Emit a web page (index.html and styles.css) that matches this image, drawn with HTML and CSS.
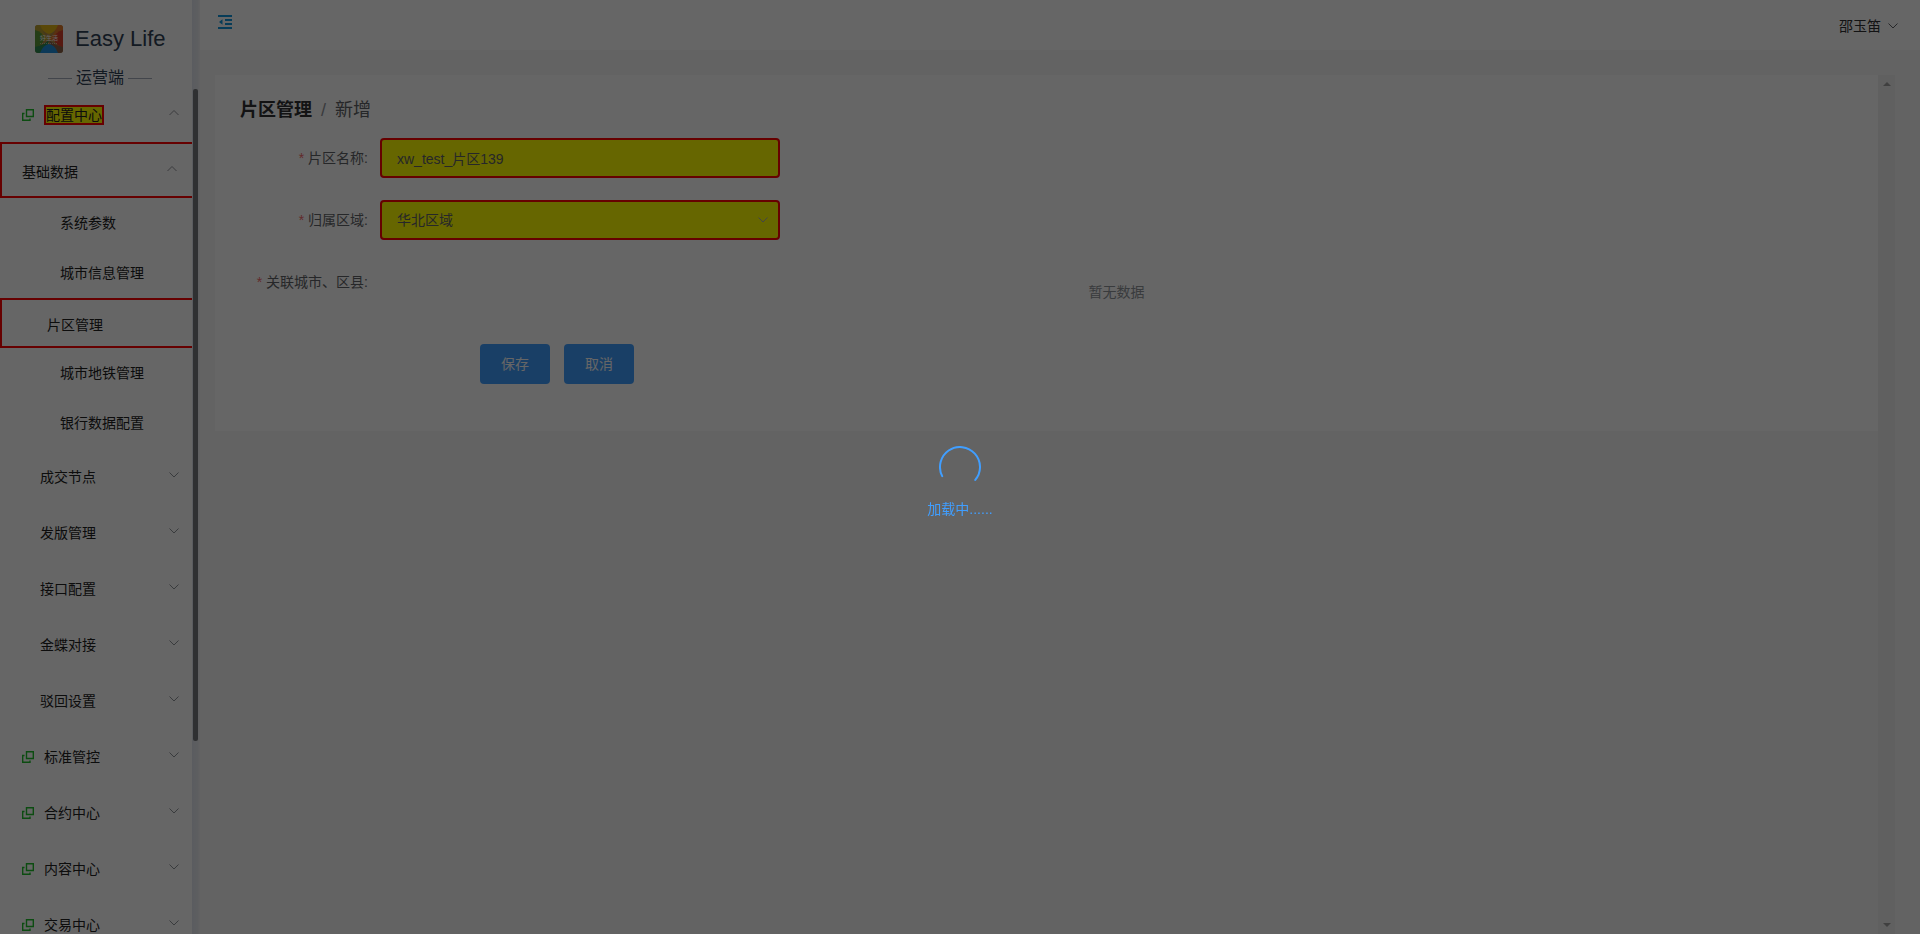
FILE: index.html
```html
<!DOCTYPE html>
<html lang="zh-CN">
<head>
<meta charset="utf-8">
<title>Easy Life 运营端</title>
<link rel="stylesheet" href="styles.css">
</head>
<body>
<svg class="defs" width="0" height="0" aria-hidden="true">
  <symbol id="down" viewBox="0 0 12 12"><path d="M1.500 3.500L6 8L10.500 3.500" fill="none" stroke="currentColor"/></symbol>
  <symbol id="up" viewBox="0 0 12 12"><path d="M1.500 8L6 3.500L10.500 8" fill="none" stroke="currentColor"/></symbol>
  <symbol id="copy" viewBox="0 0 12 12"><path d="M4.500 .7H11.300V7.500H4.500ZM2.500 4.500H.7V11.300H8V9.500" fill="none" stroke="currentColor" stroke-width="1.400"/></symbol>
</svg>
<div class="app">
  <aside class="sidebar">
    <div class="sidebar-body">
      <div class="brand">
        <svg class="logo" viewBox="0 0 28 28" aria-hidden="true">
          <defs><clipPath id="round"><rect width="28" height="28" rx="3"/></clipPath></defs>
          <g clip-path="url(#round)">
            <rect width="28" height="28" fill="#b08a48"/>
            <path d="M0 0H6Q8 9 14 14L0 20Z" fill="#b8a030"/>
            <path d="M28 0H22Q20 9 14 14L28 20Z" fill="#e07828"/>
            <path d="M5 0H23Q20 8 14 9Q8 8 5 0Z" fill="#e0b414"/>
            <path d="M0 5Q8 7 9 14Q8 20 0 23Z" fill="#5a9a38"/>
            <path d="M28 5Q20 7 19 14Q20 20 28 23Z" fill="#d8402c"/>
            <path d="M0 28V22Q9 20 14 15L10 28Z" fill="#2f8a50"/>
            <path d="M28 28V22Q19 20 14 15L18 28Z" fill="#8a6048"/>
            <path d="M5 28Q8 20 14 19Q20 20 23 28Z" fill="#1f90dc"/>
          </g>
          <text class="logo-text" x="14" y="15" text-anchor="middle">好生活</text>
          <path d="M5 18.500H23" stroke="#fff" stroke-width=".8" stroke-dasharray="1 1" opacity=".6"/>
        </svg>
        <span class="brand-name">Easy Life</span>
      </div>
      <div class="platform">运营端</div>
      <nav class="menu">
        <button class="row top" type="button"><svg class="mark"><use href="#copy"/></svg><span class="hit">配置中心</span><svg class="chev"><use href="#up"/></svg></button>
        <button class="row group-hit" type="button"><span class="name">基础数据</span><svg class="chev"><use href="#up"/></svg></button>
        <a class="row leaf" href="#">系统参数</a>
        <a class="row leaf" href="#">城市信息管理</a>
        <a class="row leaf leaf-hit" href="#">片区管理</a>
        <a class="row leaf" href="#">城市地铁管理</a>
        <a class="row leaf" href="#">银行数据配置</a>
        <button class="row group" type="button"><span class="name">成交节点</span><svg class="chev"><use href="#down"/></svg></button>
        <button class="row group" type="button"><span class="name">发版管理</span><svg class="chev"><use href="#down"/></svg></button>
        <button class="row group" type="button"><span class="name">接口配置</span><svg class="chev"><use href="#down"/></svg></button>
        <button class="row group" type="button"><span class="name">金蝶对接</span><svg class="chev"><use href="#down"/></svg></button>
        <button class="row group" type="button"><span class="name">驳回设置</span><svg class="chev"><use href="#down"/></svg></button>
        <button class="row top" type="button"><svg class="mark"><use href="#copy"/></svg><span class="name">标准管控</span><svg class="chev"><use href="#down"/></svg></button>
        <button class="row top" type="button"><svg class="mark"><use href="#copy"/></svg><span class="name">合约中心</span><svg class="chev"><use href="#down"/></svg></button>
        <button class="row top" type="button"><svg class="mark"><use href="#copy"/></svg><span class="name">内容中心</span><svg class="chev"><use href="#down"/></svg></button>
        <button class="row top" type="button"><svg class="mark"><use href="#copy"/></svg><span class="name">交易中心</span><svg class="chev"><use href="#down"/></svg></button>
      </nav>
    </div>
    <div class="side-track"><div class="side-thumb"></div></div>
  </aside>
  <div class="main">
    <header class="header">
      <button class="fold" type="button" aria-label="收起菜单">
        <svg viewBox="0 0 14 14" width="14" height="14"><path d="M0 1H14M7 5H14M7 9H14M0 13H14" stroke="currentColor" stroke-width="2"/><path d="M4.500 4.200V9.800L1 7Z" fill="currentColor"/></svg>
      </button>
      <button class="user" type="button">邵玉笛<svg class="user-chev"><use href="#down"/></svg></button>
    </header>
    <div class="viewport">
      <main class="content">
        <section class="card">
          <h1 class="crumb"><b>片区管理</b><i class="slash">/</i><span class="current">新增</span></h1>
          <form class="form">
            <div class="field">
              <label class="label" for="name">片区名称:</label>
              <input class="control" id="name" type="text" value="xw_test_片区139">
            </div>
            <div class="field">
              <label class="label" for="region">归属区域:</label>
              <div class="select-box">
                <select class="control" id="region"><option>华北区域</option></select>
                <svg class="select-chev"><use href="#down"/></svg>
              </div>
            </div>
            <div class="field">
              <span class="label">关联城市、区县:</span>
              <p class="empty">暂无数据</p>
            </div>
            <div class="actions">
              <button class="btn" type="button">保存</button>
              <button class="btn" type="button">取消</button>
            </div>
          </form>
        </section>
      </main>
      <div class="scrollbar"><span class="tri tri-up"></span><span class="tri tri-down"></span></div>
    </div>
  </div>
</div>
<div class="loading" role="status">
  <svg class="spinner" viewBox="0 0 42 42" aria-hidden="true"><path d="M3.200 30.100A20 20 0 1 1 36.300 33.900" fill="none" stroke="currentColor" stroke-width="2" stroke-linecap="round"/></svg>
  <p class="loading-text">加载中......</p>
</div>
</body>
</html>
```
FILE: styles.css
```css
* { box-sizing: border-box; }
body {
  margin: 0;
  overflow: hidden;
  font: 14px/20px "Liberation Sans", "Noto Sans CJK SC", sans-serif;
  color: #303133;
  background: #f7f7f7;
}
button, input, select { font: inherit; color: inherit; }
button { padding: 0; border: 0; background: none; text-align: left; }
a { color: inherit; text-decoration: none; }
.defs { position: absolute; }

.app { display: flex; height: 100vh; }

.sidebar { display: flex; flex: none; width: 200px; overflow: hidden; }
.sidebar-body { flex: 1; min-width: 0; overflow: hidden; background: #fff; }
.side-track {
  width: 8px;
  padding: 89px 2px 0 1px;
  background: linear-gradient(to right, #e2e6ef, #e9ebf0 70%, #f4f4f6);
}
.side-thumb { height: 652px; border-radius: 2px; background: #77797d; }

.brand { display: flex; align-items: center; gap: 12px; padding: 25px 0 0 35px; }
.logo { width: 28px; height: 28px; }
.logo-text { font-size: 6px; fill: #fff; }
.brand-name { font-size: 22px; line-height: 28px; color: #304156; }
.platform {
  display: flex;
  align-items: center;
  justify-content: center;
  gap: 4px;
  padding: 17px 0 0 8px;
  font-size: 16px;
  line-height: 16px;
  color: #304156;
}
.platform::before, .platform::after { content: ""; width: 24px; height: 1px; background: #a5acbc; }

.row {
  display: flex;
  align-items: center;
  width: 100%;
  height: 56px;
  color: #222;
}
.name { padding-top: 2px; }
.top { padding-left: 22px; }
.mark { width: 12px; height: 12px; margin: 2px 10px 0 0; color: #1fbf2b; }
.hit { margin-top: 2px; border: 2px solid #f00; background: #ff0; line-height: 16px; }
.group { padding-left: 40px; }
.chev { width: 12px; height: 12px; margin: 0 12px 2px auto; color: #909399; }
.group-hit { padding-left: 20px; border: 2px solid #f00; border-right: 0; }
.group-hit .name { padding-top: 4px; }
.group-hit .chev { margin-right: 14px; }
.leaf { height: 50px; padding-left: 60px; }
.leaf-hit { padding: 4px 0 0 45px; border: 2px solid #f00; border-right: 0; }

.main { display: flex; flex: 1; flex-direction: column; min-width: 0; }
.header {
  display: flex;
  align-items: flex-start;
  justify-content: space-between;
  height: 50px;
  padding: 15px 21px 0 18px;
  background: #fff;
}
.fold { height: 14px; color: #1296db; }
.fold svg { display: block; }
.user { display: flex; align-items: center; gap: 6px; height: 22px; }
.user-chev { width: 12px; height: 12px; color: #606266; }

.viewport { display: flex; flex: 1; min-height: 0; padding: 25px 25px 0 15px; }
.content { flex: 1; min-width: 0; overflow: hidden; }
.card { padding: 25px; background: #fff; }
.crumb {
  display: flex;
  align-items: center;
  margin: 0 0 18px;
  font-size: 18px;
  line-height: 20px;
  font-weight: 400;
}
.slash { margin: 0 9px; font-style: normal; color: #909399; }
.current { color: #606266; }

.form { display: grid; gap: 22px; }
.field { display: flex; align-items: flex-start; }
.label {
  flex: none;
  width: 140px;
  padding-right: 12px;
  line-height: 40px;
  text-align: right;
  color: #606266;
}
.label::before { content: "*"; margin-right: 4px; color: #f56c6c; }
.control {
  width: 400px;
  height: 40px;
  padding: 0 15px;
  border: 2px solid #f00;
  border-radius: 4px;
  background: #ff0;
  color: #606266;
  appearance: none;
}
.select-box { position: relative; height: 40px; }
.select-chev { position: absolute; top: 14px; right: 11px; width: 12px; height: 12px; color: #a8abb2; }
.empty { flex: 1; margin: 0; line-height: 60px; text-align: center; color: #909399; }
.actions { display: flex; gap: 14px; padding: 0 0 22px 240px; }
.btn {
  width: 70px;
  height: 40px;
  border-radius: 4px;
  background: #409eff;
  color: #fff;
  text-align: center;
}

.scrollbar {
  display: flex;
  flex-direction: column;
  align-items: center;
  justify-content: space-between;
  width: 17px;
  padding: 7px 0;
  background: #f1f1f1;
}
.tri { border: 4px solid transparent; }
.tri-up { border-top: 0; border-bottom-color: #a0a0a0; }
.tri-down { border-bottom: 0; border-top-color: #a0a0a0; }

.loading {
  position: fixed;
  inset: 0;
  display: flex;
  flex-direction: column;
  align-items: center;
  justify-content: center;
  padding-top: 30px;
  background: rgba(0, 0, 0, .6);
  color: #409eff;
}
.spinner { width: 42px; height: 42px; }
.loading-text { margin: 11px 0 0; }
```
